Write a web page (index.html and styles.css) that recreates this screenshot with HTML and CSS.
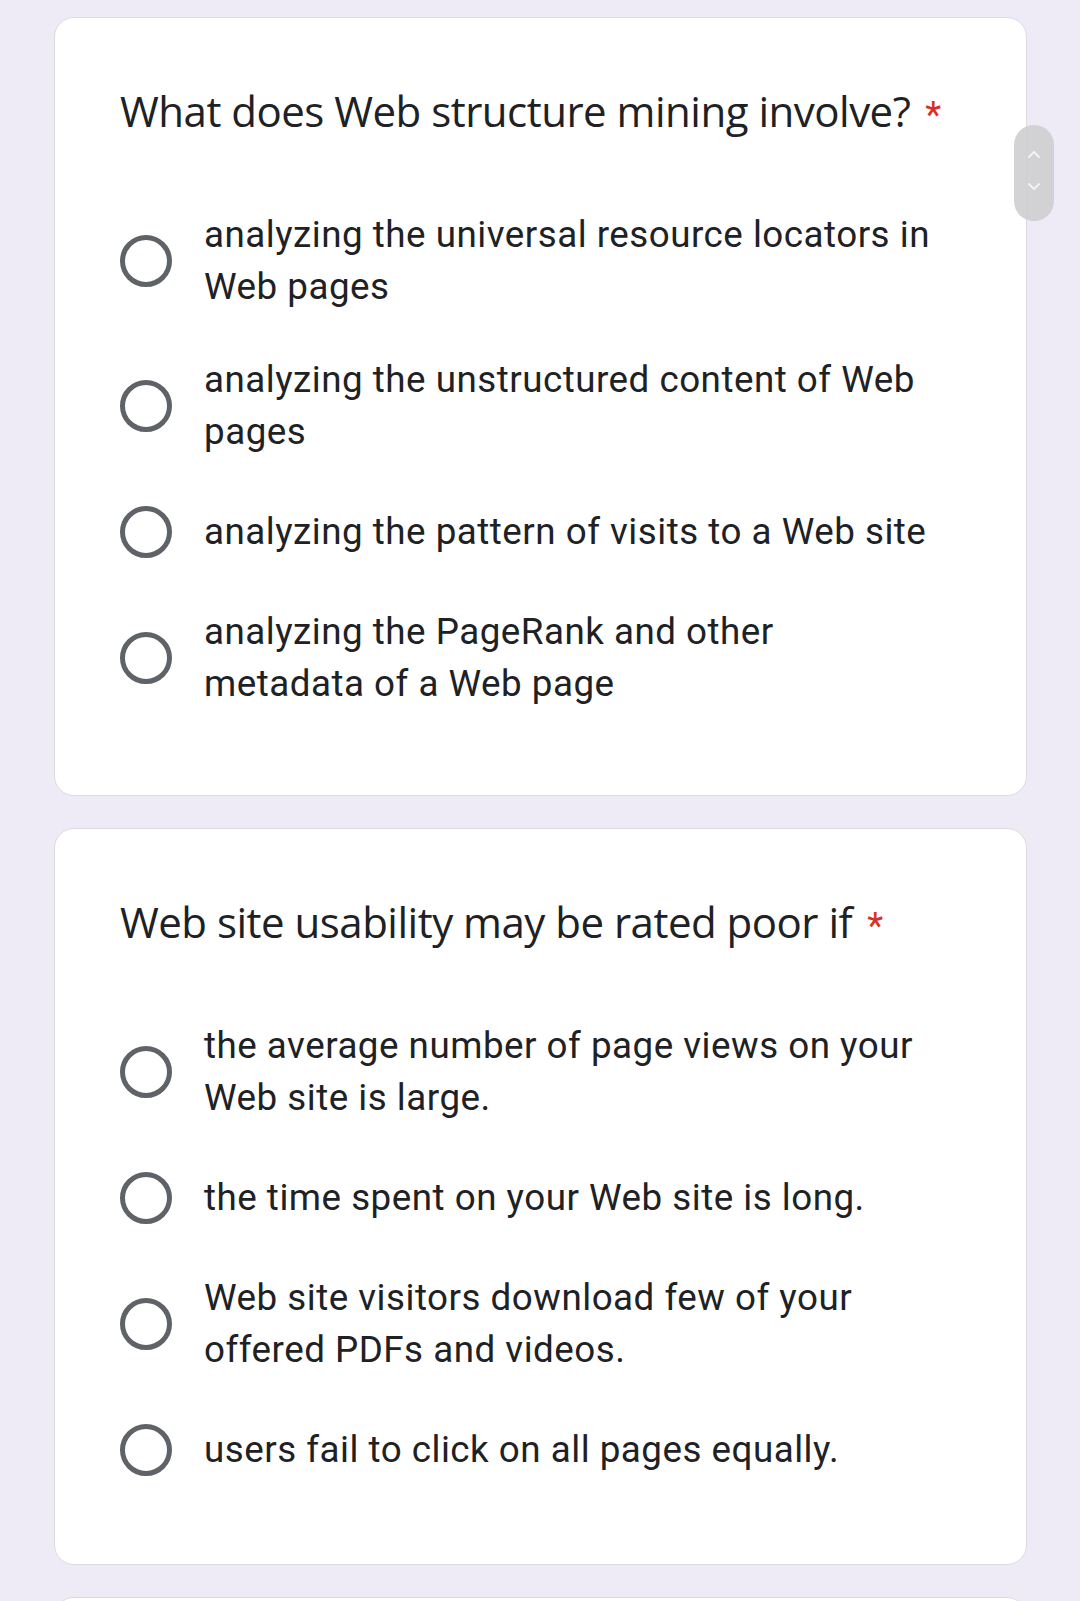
FILE: index.html
```html
<!DOCTYPE html>
<html>
<head>
<meta charset="utf-8">
<link rel="stylesheet" href="styles.css">
</head>
<body>
<div class="page">
  <div class="card">
    <div class="title">What does Web structure mining involve?<span class="req">*</span></div>
    <div class="options">
      <div class="opt"><span class="radio"></span><span class="label">analyzing the universal resource locators in Web pages</span></div>
      <div class="opt"><span class="radio"></span><span class="label">analyzing the unstructured content of Web pages</span></div>
      <div class="opt"><span class="radio"></span><span class="label">analyzing the pattern of visits to a Web site</span></div>
      <div class="opt"><span class="radio"></span><span class="label">analyzing the PageRank and other metadata of a Web page</span></div>
    </div>
  </div>
  <div class="card card-tight">
    <div class="title">Web site usability may be rated poor if<span class="req">*</span></div>
    <div class="options">
      <div class="opt"><span class="radio"></span><span class="label">the average number of page views on your Web site is large.</span></div>
      <div class="opt"><span class="radio"></span><span class="label">the time spent on your Web site is long.</span></div>
      <div class="opt"><span class="radio"></span><span class="label">Web site visitors download few of your offered PDFs and videos.</span></div>
      <div class="opt"><span class="radio"></span><span class="label">users fail to click on all pages equally.</span></div>
    </div>
  </div>
  <div class="card card-next"></div>
</div>
<div class="scroller">
  <svg viewBox="0 0 40 96" width="40" height="96">
    <path d="M15 32 L20 27 L25 32" fill="none" stroke="#f4f4f4" stroke-width="2" stroke-linecap="round" stroke-linejoin="round"/>
    <path d="M15 59 L20 64 L25 59" fill="none" stroke="#f4f4f4" stroke-width="2" stroke-linecap="round" stroke-linejoin="round"/>
  </svg>
</div>
</body>
</html>
```
FILE: styles.css
```css
html, body {
  margin: 0;
  padding: 0;
  background: #eeebf7;
  height: 1601px;
  overflow: hidden;
}
.page {
  padding-top: 17px;
  display: flex;
  flex-direction: column;
  gap: 32px;
  width: 973px;
  margin-left: 54px;
}
.card {
  background: #fff;
  border: 1px solid #dadce0;
  border-radius: 20px;
  padding: 67px 40px 85px 65px;
  box-sizing: border-box;
}
.card-tight {
  padding-bottom: 81px;
}
.card-next {
  height: 60px;
}
.title {
  font-family: "Open Sans", sans-serif;
  font-size: 42px;
  line-height: 52px;
  color: #202124;
  letter-spacing: -0.5px;
}
.req {
  font-family: Roboto, sans-serif;
  color: #d93025;
  margin-left: 15px;
  font-size: 37px;
  letter-spacing: 0;
}
.options {
  margin-top: 68px;
  display: flex;
  flex-direction: column;
  gap: 41px;
}
.opt {
  display: flex;
  align-items: center;
  min-height: 66px;
}
.radio {
  flex: none;
  width: 52px;
  height: 52px;
  border: 5px solid #5f6368;
  border-radius: 50%;
  box-sizing: border-box;
  margin-right: 32px;
}
.label {
  font-family: Roboto, sans-serif;
  font-size: 36.75px;
  line-height: 52px;
  letter-spacing: 0.5px;
  color: #202124;
  max-width: 732px;
}
.scroller {
  position: absolute;
  left: 1014px;
  top: 125px;
  width: 40px;
  height: 96px;
  background: #cfcfd1;
  border-radius: 20px;
  opacity: 0.9;
}
.scroller svg { display: block; }
```
